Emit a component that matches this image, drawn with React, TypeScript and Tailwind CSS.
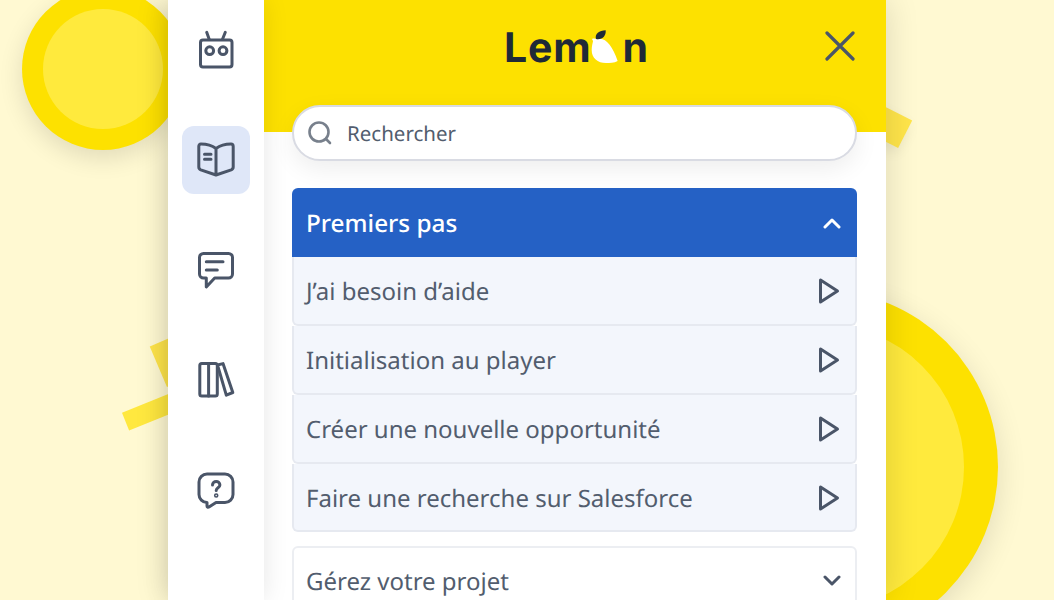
const iconClass = "h-10 w-10 fill-none stroke-[#4a5568] stroke-[3]";

function RobotIcon() {
  return (
    <svg viewBox="0 0 40 40" className={iconClass} strokeLinecap="round" strokeLinejoin="round">
      <rect x="4.5" y="10" width="31.5" height="27" rx="2.5" />
      <circle cx="13.7" cy="20.7" r="3.9" />
      <circle cx="27" cy="20.7" r="3.9" />
      <path d="M10.7 2.300 13.200 9.300M29.300 2.300 26.500 9.300" />
    </svg>
  );
}

function BookIcon() {
  return (
    <svg viewBox="0 0 40 40" className={iconClass} strokeLinecap="round" strokeLinejoin="round">
      <path d="M20 8.500C16 5.500 10 4 5 4 3.500 4 2.800 5 2.800 6.500V27c0 1.500.7 2.300 2 2.800L20 35l15.200-5.200c1.300-.5 2-1.300 2-2.800V6.500C37.200 5 36.500 4 35 4 30 4 24 5.500 20 8.500ZM20 8.500V35" />
      <path d="M8.500 14.300h6.500M8.500 19.300h6.500" />
    </svg>
  );
}

function ChatIcon() {
  return (
    <svg viewBox="0 0 40 40" className={iconClass} strokeLinecap="round" strokeLinejoin="round">
      <path d="M7.500 3.500h25a4 4 0 0 1 4 4V24a4 4 0 0 1-4 4H18.700l-8.400 9v-9H7.500a4 4 0 0 1-4-4V7.500a4 4 0 0 1 4-4Z" />
      <path d="M10.300 11.700H27M10.300 20h11" />
    </svg>
  );
}

function BooksIcon() {
  return (
    <svg viewBox="0 0 40 40" className={iconClass} strokeLinecap="round" strokeLinejoin="round">
      <rect x="3.800" y="3.500" width="17.500" height="32.500" rx="2" />
      <path d="M12.600 3.500V36" />
      <path d="M21.500 5 27 3.600 36.800 32.500 30.300 35.200Z" />
    </svg>
  );
}

function HelpIcon() {
  return (
    <svg viewBox="0 0 40 40" className={iconClass} strokeLinecap="round" strokeLinejoin="round">
      <path d="M11 4h18a8 8 0 0 1 8 8v12.500a8 8 0 0 1-8 8H20l-7 4.500c-1 .6-2 0-2-1v-3.500a8 8 0 0 1-8-8V12a8 8 0 0 1 8-8Z" />
      <path d="M16.500 15c0-4.800 7.400-4.800 7.400 0 0 2.800-3.700 2.800-3.700 5.500" />
      <circle cx="20.200" cy="25.500" r=".8" />
    </svg>
  );
}

function PlayIcon() {
  return (
    <svg viewBox="0 0 24 28" className="h-7 w-6 translate-y-px fill-none stroke-[#4a5568] stroke-[3]" strokeLinejoin="round" strokeLinecap="round">
      <path d="M3.500 3v22L20.500 14Z" />
    </svg>
  );
}

function Chevron({ up }: { up?: boolean }) {
  return (
    <svg viewBox="0 0 20 12" className={up ? "h-3 w-5 fill-none stroke-white stroke-[3]" : "h-3 w-5 -translate-y-px fill-none stroke-[#4a5568] stroke-[3]"} strokeLinecap="round" strokeLinejoin="round">
      <path d={up ? "M3 10l7-7 7 7" : "M3 2l7 7 7-7"} />
    </svg>
  );
}

function SearchIcon() {
  return (
    <svg viewBox="0 0 26 26" className="h-[26px] w-[26px] -translate-x-px fill-none stroke-[#78808c] stroke-[2.600]" strokeLinecap="round">
      <circle cx="12" cy="12" r="9.500" />
      <path d="M19 19l4 4" />
    </svg>
  );
}

function Logo() {
  return (
    <div className="flex items-end font-['Inter',sans-serif] text-[41px] font-bold leading-none tracking-[0.8px] text-[#1f2937]">
      <span>Lem</span>
      <svg viewBox="280 15 84 100" className="mb-[5px] ml-0 mr-[3px] h-[33.300px] w-[28px]">
        <path d="M283 42C290 38 296 44 302 42 325 38 345 65 360 108 350 114 335 114 325 114 300 114 282 100 282 75 282 62 286 52 286 48Z" fill="#fff" />
        <path d="M295 42C290 28 305 16 324 16 326 34 312 46 295 42Z" fill="#1f2937" />
      </svg>
      <span>n</span>
    </div>
  );
}

const steps = [
  "J’ai besoin d’aide",
  "Initialisation au player",
  "Créer une nouvelle opportunité",
  "Faire une recherche sur Salesforce",
];

export default function App() {
  return (
    <div className="relative h-[600px] w-[1054px] overflow-hidden bg-[#fff9d2] font-['Noto_Sans',sans-serif] [text-rendering:geometricPrecision]">
      {/* decorations behind the panel */}
      <div className="absolute left-[22px] top-[-12px] flex h-[162px] w-[162px] items-center justify-center rounded-full bg-[#fde100] shadow-[0_8px_24px_rgba(0,0,0,0.12)]">
        <div className="h-[120px] w-[120px] rounded-full bg-[#ffea3d]" />
      </div>
      <div className="absolute left-[644px] top-[290px] flex h-[354px] w-[354px] items-center justify-center rounded-full bg-[#fde100] shadow-[0_8px_30px_rgba(0,0,0,0.12)]">
        <div className="h-[286px] w-[286px] rounded-full bg-[#ffea3d]" />
      </div>
      <div className="absolute left-[856px] top-[107px] h-[31px] w-[52px] rotate-[27deg] bg-[#ffe54a] shadow-[0_6px_14px_rgba(0,0,0,0.08)]" />
      <div className="absolute left-[123px] top-[399px] h-[19px] w-[70px] rotate-[-22deg] bg-[#ffe83f]" />
      <div className="absolute left-[157px] top-[338px] h-[44px] w-[34px] rotate-[-23deg] bg-[#ffe54a]" />

      <div className="relative ml-[168px] flex h-[600px] w-[718px] bg-white shadow-[0_0_32px_rgba(0,0,0,0.14)]">
        <nav className="relative z-10 flex w-[96px] shrink-0 flex-col items-center gap-[42px] bg-white pt-4 shadow-[0_0_24px_rgba(0,0,0,0.1)]">
          <button className="flex h-[68px] w-[68px] items-center justify-center rounded-xl"><RobotIcon /></button>
          <button className="flex h-[68px] w-[68px] items-center justify-center rounded-xl bg-[#dfe7f8]"><BookIcon /></button>
          <button className="flex h-[68px] w-[68px] items-center justify-center rounded-xl"><ChatIcon /></button>
          <button className="flex h-[68px] w-[68px] items-center justify-center rounded-xl"><BooksIcon /></button>
          <button className="flex h-[68px] w-[68px] items-center justify-center rounded-xl"><HelpIcon /></button>
        </nav>

        <main className="min-w-0 flex-1">
          <header className="flex h-[132px] items-start justify-between bg-[#fde100] pl-[240px] pr-[31px] pt-[27px]">
            <Logo />
            <svg viewBox="0 0 30 30" className="mt-[4px] h-[30px] w-[30px] fill-none stroke-[#4a5568] stroke-[3.200]" strokeLinecap="round">
              <path d="M2 2l26 26M28 2 2 28" />
            </svg>
          </header>

          <div className="pl-[28px] pr-[29px]">
            <div className="relative z-10 mt-[-27px] flex h-[56px] items-center gap-[14px] rounded-[28px] border-2 border-[#d9dbe3] bg-white pl-[14px] text-[20.500px] text-[#525d6e] shadow-[0_8px_24px_rgba(0,0,0,0.07)]">
              <SearchIcon />
              <span className="translate-y-px -translate-x-px">Rechercher</span>
            </div>

            <section className="mt-[27px]">
              <div className="flex h-[69px] items-center justify-between rounded-t-md bg-[#2561c5] pl-[14px] pr-[15px] text-[24.300px] font-medium text-white">
                <span className="translate-y-[2px]">Premiers pas</span>
                <Chevron up />
              </div>
              {steps.map((step) => (
                <div key={step} className="flex h-[68.850px] items-center justify-between rounded-b-md border-2 border-t-0 border-[#e6e9f0] bg-[#f3f6fc] pl-[12px] pr-[14px] text-[24px] text-[#525d6e]">
                  <span className="translate-y-[2px]">{step}</span>
                  <PlayIcon />
                </div>
              ))}
            </section>

            <div className="mt-[13.500px] flex h-[72px] items-center justify-between rounded-md border-2 border-[#eceef2] bg-white pl-[12px] pr-[13px] text-[24px] text-[#525d6e]">
              <span>Gérez votre projet</span>
              <Chevron />
            </div>
          </div>
        </main>
      </div>
    </div>
  );
}
